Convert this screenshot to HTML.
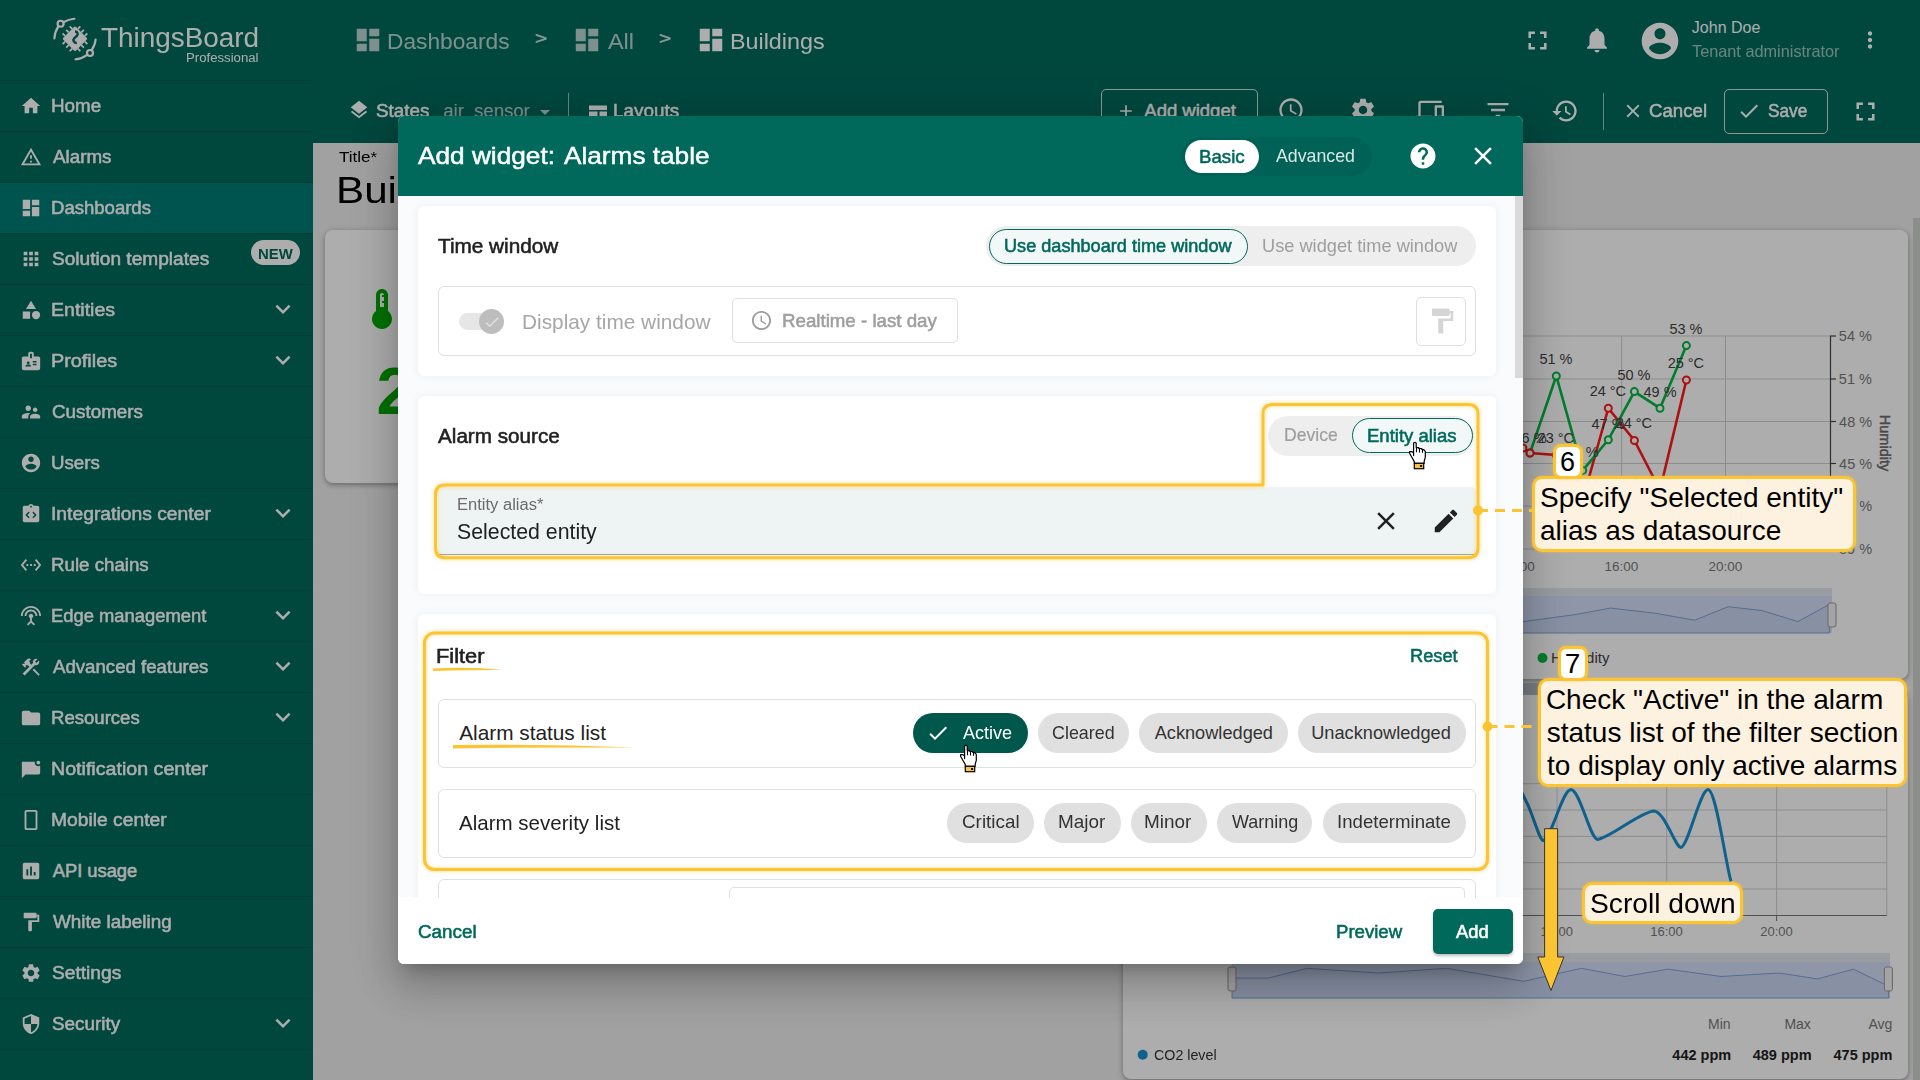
<!DOCTYPE html>
<html><head><meta charset="utf-8"><style>
html,body{margin:0;padding:0;width:1920px;height:1080px;overflow:hidden;}
body{position:relative;font-family:"Liberation Sans",sans-serif;background:#eeeeee;}
.t{position:absolute;white-space:pre;line-height:1;transform-origin:0 0;}
.a{position:absolute;box-sizing:border-box;}
svg.i{position:absolute;}

</style></head><body>
<div class="a" style="left:0;top:0;width:1920px;height:143px;background:#00695c"></div>
<div class="a" style="left:0;top:0;width:313px;height:1080px;background:#00695c"></div>
<div class="a" style="left:313px;top:143px;width:1607px;height:937px;background:#eeeeee"></div>
<div class="a" style="left:0;top:80px;width:313px;height:1px;background:rgba(0,0,0,.12)"></div>
<div class="a" style="left:0;top:131px;width:313px;height:1px;background:rgba(0,0,0,.12)"></div>
<svg class="i" style="left:20.00px;top:94.50px;" width="22" height="22" viewBox="0 0 24 24"><path fill="#ffffff" d="M10 20v-6h4v6h5v-8h3L12 3 2 12h3v8z"/></svg>
<div class="t" style="left:51.29px;top:96.51px;font-size:18.3px;color:#ffffff;transform:scaleX(1.0281);-webkit-text-stroke:0.5px #ffffff;">Home</div>
<div class="a" style="left:0;top:182px;width:313px;height:1px;background:rgba(0,0,0,.12)"></div>
<svg class="i" style="left:20.00px;top:145.50px;" width="22" height="22" viewBox="0 0 24 24"><path fill="#ffffff" d="M12 5.99L19.53 19H4.47L12 5.99M12 2L1 21h22L12 2zm1 14h-2v2h2v-2zm0-6h-2v4h2v-4z"/></svg>
<div class="t" style="left:52.80px;top:147.51px;font-size:18.3px;color:#ffffff;transform:scaleX(1.0286);-webkit-text-stroke:0.5px #ffffff;">Alarms</div>
<div class="a" style="left:0;top:183px;width:313px;height:50px;background:#007d75"></div>
<div class="a" style="left:0;top:233px;width:313px;height:1px;background:rgba(0,0,0,.12)"></div>
<svg class="i" style="left:20.00px;top:196.50px;" width="22" height="22" viewBox="0 0 24 24"><path fill="#ffffff" d="M3 13h8V3H3v10zm0 8h8v-6H3v6zm10 0h8V11h-8v10zm0-18v6h8V3h-8z"/></svg>
<div class="t" style="left:51.32px;top:198.51px;font-size:18.3px;color:#ffffff;transform:scaleX(1.0138);-webkit-text-stroke:0.5px #ffffff;">Dashboards</div>
<div class="a" style="left:0;top:284px;width:313px;height:1px;background:rgba(0,0,0,.12)"></div>
<svg class="i" style="left:20.00px;top:247.50px;" width="22" height="22" viewBox="0 0 24 24"><path fill="#ffffff" d="M4 8h4V4H4v4zm6 12h4v-4h-4v4zm-6 0h4v-4H4v4zm0-6h4v-4H4v4zm6 0h4v-4h-4v4zm6-10v4h4V4h-4zm-6 4h4V4h-4v4zm6 6h4v-4h-4v4zm0 6h4v-4h-4v4z"/></svg>
<div class="t" style="left:52.04px;top:249.51px;font-size:18.3px;color:#ffffff;transform:scaleX(1.0451);-webkit-text-stroke:0.5px #ffffff;">Solution templates</div>
<div class="a" style="left:0;top:335px;width:313px;height:1px;background:rgba(0,0,0,.12)"></div>
<svg class="i" style="left:20.00px;top:298.50px;" width="22" height="22" viewBox="0 0 24 24"><path fill="#ffffff" d="M12 2l-5.5 9h11z M17.5 13a4.5 4.5 0 1 0 0 9 4.5 4.5 0 1 0 0-9z M3 13.5h8v8H3z"/></svg>
<div class="t" style="left:51.23px;top:300.51px;font-size:18.3px;color:#ffffff;transform:scaleX(1.0690);-webkit-text-stroke:0.5px #ffffff;">Entities</div>
<svg class="i" style="left:267.50px;top:293.50px;" width="30" height="30" viewBox="0 0 24 24"><path fill="#ffffff" d="M16.59 8.59L12 13.17 7.41 8.59 6 10l6 6 6-6z"/></svg>
<div class="a" style="left:0;top:386px;width:313px;height:1px;background:rgba(0,0,0,.12)"></div>
<svg class="i" style="left:20.00px;top:349.50px;" width="22" height="22" viewBox="0 0 24 24"><path fill="#ffffff" d="M20 7h-5V4c0-1.1-.9-2-2-2h-2c-1.1 0-2 .9-2 2v3H4c-1.1 0-2 .9-2 2v11c0 1.1.9 2 2 2h16c1.1 0 2-.9 2-2V9c0-1.1-.9-2-2-2zM11 4h2v5h-2V4zm-2 8.5c.83 0 1.5.67 1.5 1.5s-.67 1.5-1.5 1.5-1.5-.67-1.5-1.5.67-1.5 1.5-1.5zM12 18H6v-.75c0-1 2-1.5 3-1.5s3 .5 3 1.5V18zm6-1.5h-4V15h4v1.5zm0-3h-4V12h4v1.5z"/></svg>
<div class="t" style="left:51.21px;top:351.51px;font-size:18.3px;color:#ffffff;transform:scaleX(1.0846);-webkit-text-stroke:0.5px #ffffff;">Profiles</div>
<svg class="i" style="left:267.50px;top:344.50px;" width="30" height="30" viewBox="0 0 24 24"><path fill="#ffffff" d="M16.59 8.59L12 13.17 7.41 8.59 6 10l6 6 6-6z"/></svg>
<div class="a" style="left:0;top:437px;width:313px;height:1px;background:rgba(0,0,0,.12)"></div>
<svg class="i" style="left:20.00px;top:400.50px;" width="22" height="22" viewBox="0 0 24 24"><path fill="#ffffff" d="M16.5 12c1.38 0 2.49-1.12 2.49-2.5S17.88 7 16.5 7C15.12 7 14 8.12 14 9.5s1.12 2.5 2.5 2.5zM9 11c1.66 0 2.99-1.34 2.99-3S10.66 5 9 5C7.34 5 6 6.34 6 8s1.34 3 3 3zm7.5 3c-1.83 0-5.5.92-5.5 2.75V19h11v-2.25c0-1.83-3.67-2.75-5.5-2.75zM9 13c-2.33 0-7 1.17-7 3.5V19h7v-2.25c0-.85.33-2.34 2.37-3.47C10.5 13.1 9.66 13 9 13z"/></svg>
<div class="t" style="left:51.86px;top:402.51px;font-size:18.3px;color:#ffffff;transform:scaleX(1.0287);-webkit-text-stroke:0.5px #ffffff;">Customers</div>
<div class="a" style="left:0;top:488px;width:313px;height:1px;background:rgba(0,0,0,.12)"></div>
<svg class="i" style="left:20.00px;top:451.50px;" width="22" height="22" viewBox="0 0 24 24"><path fill="#ffffff" d="M12 2C6.48 2 2 6.48 2 12s4.48 10 10 10 10-4.48 10-10S17.52 2 12 2zm0 3c1.66 0 3 1.34 3 3s-1.34 3-3 3-3-1.34-3-3 1.34-3 3-3zm0 14.2c-2.5 0-4.71-1.28-6-3.22.03-1.99 4-3.08 6-3.08 1.99 0 5.97 1.09 6 3.08-1.29 1.94-3.5 3.22-6 3.22z"/></svg>
<div class="t" style="left:51.49px;top:453.51px;font-size:18.3px;color:#ffffff;transform:scaleX(1.0227);-webkit-text-stroke:0.5px #ffffff;">Users</div>
<div class="a" style="left:0;top:539px;width:313px;height:1px;background:rgba(0,0,0,.12)"></div>
<svg class="i" style="left:20.00px;top:502.50px;" width="22" height="22" viewBox="0 0 24 24"><path fill="#ffffff" d="M19 3h-4.18C14.4 1.84 13.3 1 12 1s-2.4.84-2.82 2H5c-1.1 0-2 .9-2 2v14c0 1.1.9 2 2 2h14c1.1 0 2-.9 2-2V5c0-1.1-.9-2-2-2zm-7 0c.55 0 1 .45 1 1s-.45 1-1 1-1-.45-1-1 .45-1 1-1zM10.5 15.5L9.4 16.6 5.8 13l3.6-3.6 1.1 1.1L8 13l2.5 2.5zm3 0L16 13l-2.5-2.5 1.1-1.1 3.6 3.6-3.6 3.6-1.1-1.1z"/></svg>
<div class="t" style="left:51.06px;top:504.51px;font-size:18.3px;color:#ffffff;transform:scaleX(1.0555);-webkit-text-stroke:0.5px #ffffff;">Integrations center</div>
<svg class="i" style="left:267.50px;top:497.50px;" width="30" height="30" viewBox="0 0 24 24"><path fill="#ffffff" d="M16.59 8.59L12 13.17 7.41 8.59 6 10l6 6 6-6z"/></svg>
<div class="a" style="left:0;top:590px;width:313px;height:1px;background:rgba(0,0,0,.12)"></div>
<svg class="i" style="left:20.00px;top:553.50px;" width="22" height="22" viewBox="0 0 24 24"><path fill="#ffffff" d="M7.77 6.76L6.23 5.48.82 12l5.41 6.52 1.54-1.28L3.42 12l4.35-5.24zM7 13h2v-2H7v2zm10-2h-2v2h2v-2zm-6 2h2v-2h-2v2zm6.77-7.52l-1.54 1.28L20.58 12l-4.35 5.24 1.54 1.28L23.18 12l-5.41-6.52z"/></svg>
<div class="t" style="left:51.30px;top:555.51px;font-size:18.3px;color:#ffffff;transform:scaleX(1.0229);-webkit-text-stroke:0.5px #ffffff;">Rule chains</div>
<div class="a" style="left:0;top:641px;width:313px;height:1px;background:rgba(0,0,0,.12)"></div>
<svg class="i" style="left:20.00px;top:604.50px;" width="22" height="22" viewBox="0 0 24 24"><path fill="#ffffff" d="M12 5c-3.87 0-7 3.13-7 7h2c0-2.76 2.24-5 5-5s5 2.24 5 5h2c0-3.87-3.13-7-7-7zm1 9.29c.88-.39 1.5-1.26 1.5-2.29 0-1.38-1.12-2.5-2.5-2.5S9.5 10.62 9.5 12c0 1.02.62 1.9 1.5 2.29v3.3L7.59 21 9 22.41l3-3 3 3L16.41 21 13 17.59v-3.3zM12 1C5.93 1 1 5.93 1 12h2c0-4.97 4.03-9 9-9s9 4.03 9 9h2c0-6.07-4.93-11-11-11z"/></svg>
<div class="t" style="left:51.33px;top:606.51px;font-size:18.3px;color:#ffffff;transform:scaleX(1.0051);-webkit-text-stroke:0.5px #ffffff;">Edge management</div>
<svg class="i" style="left:267.50px;top:599.50px;" width="30" height="30" viewBox="0 0 24 24"><path fill="#ffffff" d="M16.59 8.59L12 13.17 7.41 8.59 6 10l6 6 6-6z"/></svg>
<div class="a" style="left:0;top:692px;width:313px;height:1px;background:rgba(0,0,0,.12)"></div>
<svg class="i" style="left:20.00px;top:655.50px;" width="22" height="22" viewBox="0 0 24 24"><path fill="#ffffff" d="M13.78 15.17l1.41-1.41 6.36 6.36-1.41 1.41zM17.5 10c1.93 0 3.5-1.57 3.5-3.5 0-.58-.16-1.12-.41-1.6l-2.7 2.7-1.49-1.49 2.7-2.7c-.48-.25-1.02-.41-1.6-.41C15.57 3 14 4.57 14 6.5c0 .41.08.8.21 1.16l-1.85 1.85-1.78-1.78.71-.71-1.41-1.41L12 3.49c-1.17-1.17-3.07-1.17-4.24 0L4.22 7.03l1.41 1.41H2.81l-.71.71 3.54 3.54.71-.71V9.15l1.41 1.41.71-.71 1.78 1.78-7.41 7.41 2.12 2.12L16.34 9.79c.36.13.75.21 1.16.21z"/></svg>
<div class="t" style="left:52.80px;top:657.51px;font-size:18.3px;color:#ffffff;transform:scaleX(1.0194);-webkit-text-stroke:0.5px #ffffff;">Advanced features</div>
<svg class="i" style="left:267.50px;top:650.50px;" width="30" height="30" viewBox="0 0 24 24"><path fill="#ffffff" d="M16.59 8.59L12 13.17 7.41 8.59 6 10l6 6 6-6z"/></svg>
<div class="a" style="left:0;top:743px;width:313px;height:1px;background:rgba(0,0,0,.12)"></div>
<svg class="i" style="left:20.00px;top:706.50px;" width="22" height="22" viewBox="0 0 24 24"><path fill="#ffffff" d="M10 4H4c-1.1 0-1.99.9-1.99 2L2 18c0 1.1.9 2 2 2h16c1.1 0 2-.9 2-2V8c0-1.1-.9-2-2-2h-8l-2-2z"/></svg>
<div class="t" style="left:51.31px;top:708.51px;font-size:18.3px;color:#ffffff;transform:scaleX(1.0151);-webkit-text-stroke:0.5px #ffffff;">Resources</div>
<svg class="i" style="left:267.50px;top:701.50px;" width="30" height="30" viewBox="0 0 24 24"><path fill="#ffffff" d="M16.59 8.59L12 13.17 7.41 8.59 6 10l6 6 6-6z"/></svg>
<div class="a" style="left:0;top:794px;width:313px;height:1px;background:rgba(0,0,0,.12)"></div>
<svg class="i" style="left:20.00px;top:757.50px;" width="22" height="22" viewBox="0 0 24 24"><path fill="#ffffff" d="M20 2.9a2.1 2.1 0 1 1 0 4.2 2.1 2.1 0 0 1 0-4.2zM2 4h14.2a3.9 3.9 0 0 0 5.8 4.3V16c0 1.1-.9 2-2 2H6l-4 4z"/></svg>
<div class="t" style="left:51.23px;top:759.51px;font-size:18.3px;color:#ffffff;transform:scaleX(1.0741);-webkit-text-stroke:0.5px #ffffff;">Notification center</div>
<div class="a" style="left:0;top:845px;width:313px;height:1px;background:rgba(0,0,0,.12)"></div>
<svg class="i" style="left:20.00px;top:808.50px;" width="22" height="22" viewBox="0 0 24 24"><path fill="#ffffff" d="M17 1.01L7 1c-1.1 0-2 .9-2 2v18c0 1.1.9 2 2 2h10c1.1 0 2-.9 2-2V3c0-1.1-.9-1.99-2-1.99zM17 21H7V3h10v18z"/></svg>
<div class="t" style="left:51.26px;top:810.51px;font-size:18.3px;color:#ffffff;transform:scaleX(1.0541);-webkit-text-stroke:0.5px #ffffff;">Mobile center</div>
<div class="a" style="left:0;top:896px;width:313px;height:1px;background:rgba(0,0,0,.12)"></div>
<svg class="i" style="left:20.00px;top:859.50px;" width="22" height="22" viewBox="0 0 24 24"><path fill="#ffffff" d="M19 3H5c-1.1 0-2 .9-2 2v14c0 1.1.9 2 2 2h14c1.1 0 2-.9 2-2V5c0-1.1-.9-2-2-2zM9 17H7v-7h2v7zm4 0h-2V7h2v10zm4 0h-2v-4h2v4z"/></svg>
<div class="t" style="left:52.80px;top:861.51px;font-size:18.3px;color:#ffffff;-webkit-text-stroke:0.5px #ffffff;">API usage</div>
<div class="a" style="left:0;top:947px;width:313px;height:1px;background:rgba(0,0,0,.12)"></div>
<svg class="i" style="left:20.00px;top:910.50px;" width="22" height="22" viewBox="0 0 24 24"><path fill="#ffffff" d="M18 4V3c0-.55-.45-1-1-1H5c-.55 0-1 .45-1 1v4c0 .55.45 1 1 1h12c.55 0 1-.45 1-1V6h1v4H9v11c0 .55.45 1 1 1h2c.55 0 1-.45 1-1v-9h8V4h-3z"/></svg>
<div class="t" style="left:52.80px;top:912.51px;font-size:18.3px;color:#ffffff;transform:scaleX(1.0336);-webkit-text-stroke:0.5px #ffffff;">White labeling</div>
<div class="a" style="left:0;top:998px;width:313px;height:1px;background:rgba(0,0,0,.12)"></div>
<svg class="i" style="left:20.00px;top:961.50px;" width="22" height="22" viewBox="0 0 24 24"><path fill="#ffffff" d="M19.14 12.94c.04-.3.06-.61.06-.94 0-.32-.02-.64-.07-.94l2.03-1.58c.18-.14.23-.41.12-.61l-1.92-3.32c-.12-.22-.37-.29-.59-.22l-2.39.96c-.5-.38-1.03-.7-1.62-.94l-.36-2.54c-.04-.24-.24-.41-.48-.41h-3.84c-.24 0-.43.17-.47.41l-.36 2.54c-.59.24-1.13.57-1.62.94l-2.39-.96c-.22-.08-.47 0-.59.22L2.74 8.87c-.12.21-.08.47.12.61l2.03 1.58c-.05.3-.09.63-.09.94s.02.64.07.94l-2.03 1.58c-.18.14-.23.41-.12.61l1.92 3.32c.12.22.37.29.59.22l2.39-.96c.5.38 1.030.7 1.62.94l.36 2.54c.05.24.24.41.48.41h3.84c.24 0 .44-.17.47-.41l.36-2.54c.59-.24 1.13-.56 1.62-.94l2.39.96c.22.08.47 0 .59-.22l1.92-3.32c.12-.22.07-.47-.12-.61l-2.01-1.58zM12 15.6c-1.98 0-3.6-1.62-3.6-3.6s1.62-3.6 3.6-3.6 3.6 1.62 3.6 3.6-1.62 3.6-3.6 3.6z"/></svg>
<div class="t" style="left:52.03px;top:963.51px;font-size:18.3px;color:#ffffff;transform:scaleX(1.0487);-webkit-text-stroke:0.5px #ffffff;">Settings</div>
<div class="a" style="left:0;top:1049px;width:313px;height:1px;background:rgba(0,0,0,.12)"></div>
<svg class="i" style="left:20.00px;top:1012.50px;" width="22" height="22" viewBox="0 0 24 24"><path fill="#ffffff" d="M12 1L3 5v6c0 5.55 3.84 10.74 9 12 5.16-1.26 9-6.45 9-12V5l-9-4zm0 10.99h7c-.53 4.12-3.28 7.79-7 8.94V12H5V6.3l7-3.11v8.8z"/></svg>
<div class="t" style="left:52.04px;top:1014.51px;font-size:18.3px;color:#ffffff;transform:scaleX(1.0325);-webkit-text-stroke:0.5px #ffffff;">Security</div>
<svg class="i" style="left:267.50px;top:1007.50px;" width="30" height="30" viewBox="0 0 24 24"><path fill="#ffffff" d="M16.59 8.59L12 13.17 7.41 8.59 6 10l6 6 6-6z"/></svg>
<div class="a" style="left:251px;top:240px;width:49px;height:25px;border-radius:13px;background:#fff"></div>
<div class="t" style="left:257.60px;top:246.65px;font-size:14px;color:#00695c;font-weight:bold;transform:scaleX(1.0656);">NEW</div>
<svg class="i" style="left:50px;top:14px" width="50" height="50" viewBox="0 0 50 50">
<g fill="none" stroke="#fff" stroke-width="2.2" stroke-linecap="round">
<path d="M8.3 12.3 C6 16 4.6 20 4.4 24.5"/><circle cx="10.6" cy="9.75" r="3"/><path d="M13.4 8.3 C17 6 20.5 5 24.4 4.75"/>
<path d="M41.7 36.2 C44 32.5 45.4 29 45.6 25.5"/><circle cx="40" cy="39" r="3"/><path d="M37.2 40.8 C33.5 43.5 29.5 45 25.6 45.4"/>
</g>
<g transform="translate(25,24.75) rotate(45)"><rect x="-9" y="-9" width="18" height="18" rx="1.5" fill="#fff"/>
<path d="M-5 -12.5v3.5M0 -12.5v3.5M5 -12.5v3.5M-5 9v3.5M0 9v3.5M5 9v3.5M-12.5 -5h3.5M-12.5 0h3.5M-12.5 5h3.5M9 -5h3.5M9 0h3.5M9 5h3.5" stroke="#fff" stroke-width="1.8"/></g>
<path d="M25 17.5 c2.5 0 3.5 2.5 1.8 4.3 l-2.6 2.6 c-1.8 1.8 0 4.6 2.6 4.6" fill="none" stroke="#00695c" stroke-width="2.4"/>
</svg>
<div class="t" style="left:101.34px;top:24.64px;font-size:27px;color:#ffffff;transform:scaleX(1.0329);">ThingsBoard</div>
<div class="t" style="left:186.45px;top:52.34px;font-size:12.3px;color:#ffffff;transform:scaleX(1.0707);">Professional</div>
<svg class="i" style="left:352.50px;top:25.00px;" width="30" height="30" viewBox="0 0 24 24"><path fill="rgba(255,255,255,.72)" d="M3 13h8V3H3v10zm0 8h8v-6H3v6zm10 0h8V11h-8v10zm0-18v6h8V3h-8z"/></svg>
<div class="t" style="left:387.18px;top:30.95px;font-size:22.5px;color:rgba(255,255,255,.72);transform:scaleX(1.0097);">Dashboards</div>
<div class="t" style="left:535.16px;top:29.61px;font-size:17px;color:rgba(255,255,255,.72);transform:scaleX(1.2353);-webkit-text-stroke:0.5px rgba(255,255,255,.72);">&gt;</div>
<svg class="i" style="left:571.50px;top:25.00px;" width="30" height="30" viewBox="0 0 24 24"><path fill="rgba(255,255,255,.72)" d="M3 13h8V3H3v10zm0 8h8v-6H3v6zm10 0h8V11h-8v10zm0-18v6h8V3h-8z"/></svg>
<div class="t" style="left:607.70px;top:30.95px;font-size:22.5px;color:rgba(255,255,255,.72);transform:scaleX(1.0379);">All</div>
<div class="t" style="left:659.16px;top:29.61px;font-size:17px;color:rgba(255,255,255,.72);transform:scaleX(1.2353);-webkit-text-stroke:0.5px rgba(255,255,255,.72);">&gt;</div>
<svg class="i" style="left:695.50px;top:25.00px;" width="30" height="30" viewBox="0 0 24 24"><path fill="#ffffff" d="M3 13h8V3H3v10zm0 8h8v-6H3v6zm10 0h8V11h-8v10zm0-18v6h8V3h-8z"/></svg>
<div class="t" style="left:729.84px;top:30.95px;font-size:22.5px;color:#ffffff;transform:scaleX(1.0357);">Buildings</div>
<svg class="i" style="left:1521.50px;top:24.50px;" width="31" height="31" viewBox="0 0 24 24"><path fill="#ffffff" d="M7 14H5v5h5v-2H7v-3zm-2-4h2V7h3V5H5v5zm12 7h-3v2h5v-5h-2v3zM14 5v2h3v3h2V5h-5z"/></svg>
<svg class="i" style="left:1582.00px;top:25.00px;" width="30" height="30" viewBox="0 0 24 24"><path fill="#ffffff" d="M12 22c1.1 0 2-.9 2-2h-4c0 1.1.89 2 2 2zm6-6v-5c0-3.07-1.64-5.64-4.5-6.32V4c0-.83-.67-1.5-1.5-1.5s-1.5.67-1.5 1.5v.68C7.63 5.36 6 7.92 6 11v5l-2 2v1h16v-1l-2-2z"/></svg>
<svg class="i" style="left:1637.50px;top:18.50px;" width="44" height="44" viewBox="0 0 24 24"><path fill="#ffffff" d="M12 2C6.48 2 2 6.48 2 12s4.48 10 10 10 10-4.48 10-10S17.52 2 12 2zm0 3c1.66 0 3 1.34 3 3s-1.34 3-3 3-3-1.34-3-3 1.34-3 3-3zm0 14.2c-2.5 0-4.71-1.28-6-3.22.03-1.99 4-3.08 6-3.08 1.99 0 5.97 1.09 6 3.08-1.29 1.94-3.5 3.22-6 3.22z"/></svg>
<div class="t" style="left:1691.84px;top:19.76px;font-size:16px;color:#ffffff;">John Doe</div>
<div class="t" style="left:1691.67px;top:43.33px;font-size:16.5px;color:rgba(255,255,255,.6);transform:scaleX(0.9869);">Tenant administrator</div>
<svg class="i" style="left:1857.00px;top:27.00px;" width="26" height="26" viewBox="0 0 24 24"><path fill="#ffffff" d="M12 8c1.1 0 2-.9 2-2s-.9-2-2-2-2 .9-2 2 .9 2 2 2zm0 2c-1.1 0-2 .9-2 2s.9 2 2 2 2-.9 2-2-.9-2-2-2zm0 6c-1.1 0-2 .9-2 2s.9 2 2 2 2-.9 2-2-.9-2-2-2z"/></svg>
<svg class="i" style="left:347.50px;top:99.00px;" width="22" height="22" viewBox="0 0 24 24"><path fill="#ffffff" d="M11.99 18.54l-7.37-5.73L3 14.07l9 7 9-7-1.63-1.27-7.38 5.74zM12 16l7.36-5.73L21 9l-9-7-9 7 1.63 1.27L12 16z"/></svg>
<div class="t" style="left:375.95px;top:101.64px;font-size:18.5px;color:#ffffff;transform:scaleX(1.0166);-webkit-text-stroke:0.5px #ffffff;">States</div>
<div class="t" style="left:443.26px;top:101.64px;font-size:18.5px;color:rgba(255,255,255,.72);">air_sensor</div>
<svg class="i" style="left:533.00px;top:100.00px;" width="24" height="24" viewBox="0 0 24 24"><path fill="rgba(255,255,255,.72)" d="M7 10l5 5 5-5z"/></svg>
<div class="a" style="left:568px;top:93px;width:1px;height:40px;background:rgba(255,255,255,.6)"></div>
<svg class="i" style="left:585.60px;top:99.50px;" width="24" height="24" viewBox="0 0 24 24"><path fill="#ffffff" d="M3 5.5h18v4.5H3z M3 11.5h8.5v7.5H3z M13.5 11.5h7.5v7.5h-7.5z"/></svg>
<div class="t" style="left:613.49px;top:101.64px;font-size:18.5px;color:#ffffff;transform:scaleX(1.0198);-webkit-text-stroke:0.5px #ffffff;">Layouts</div>
<div class="a" style="left:1101px;top:89px;width:157px;height:45px;border:1.5px solid rgba(255,255,255,.8);border-radius:5px"></div>
<svg class="i" style="left:1116.00px;top:101.00px;" width="20" height="20" viewBox="0 0 24 24"><path fill="#ffffff" d="M19 13h-6v6h-2v-6H5v-2h6V5h2v6h6v2z"/></svg>
<div class="t" style="left:1144.30px;top:101.64px;font-size:18.5px;color:#ffffff;-webkit-text-stroke:0.5px #ffffff;">Add widget</div>
<svg class="i" style="left:1276.50px;top:96.00px;" width="28" height="28" viewBox="0 0 24 24"><path fill="#ffffff" d="M11.99 2C6.47 2 2 6.48 2 12s4.47 10 9.99 10C17.52 22 22 17.52 22 12S17.52 2 11.99 2zM12 20c-4.42 0-8-3.58-8-8s3.58-8 8-8 8 3.58 8 8-3.58 8-8 8zm.5-13H11v6l5.25 3.15.75-1.23-4.5-2.67z"/></svg>
<svg class="i" style="left:1348.50px;top:96.00px;" width="28" height="28" viewBox="0 0 24 24"><path fill="#ffffff" d="M19.14 12.94c.04-.3.06-.61.06-.94 0-.32-.02-.64-.07-.94l2.03-1.58c.18-.14.23-.41.12-.61l-1.92-3.32c-.12-.22-.37-.29-.59-.22l-2.39.96c-.5-.38-1.03-.7-1.62-.94l-.36-2.54c-.04-.24-.24-.41-.48-.41h-3.84c-.24 0-.43.17-.47.41l-.36 2.54c-.59.24-1.13.57-1.62.94l-2.39-.96c-.22-.08-.47 0-.59.22L2.74 8.87c-.12.21-.08.47.12.61l2.03 1.58c-.05.3-.09.63-.09.94s.02.64.07.94l-2.03 1.58c-.18.14-.23.41-.12.61l1.92 3.32c.12.22.37.29.59.22l2.39-.96c.5.38 1.030.7 1.62.94l.36 2.54c.05.24.24.41.48.41h3.84c.24 0 .44-.17.47-.41l.36-2.54c.59-.24 1.13-.56 1.62-.94l2.39.96c.22.08.47 0 .59-.22l1.92-3.32c.12-.22.07-.47-.12-.61l-2.01-1.58zM12 15.6c-1.98 0-3.6-1.62-3.6-3.6s1.62-3.6 3.6-3.6 3.6 1.62 3.6 3.6-1.62 3.6-3.6 3.6z"/></svg>
<svg class="i" style="left:1416.00px;top:96.00px;" width="28" height="28" viewBox="0 0 24 24"><path fill="#ffffff" d="M4 6h18V4H4c-1.1 0-2 .9-2 2v11H0v3h14v-3H4V6zm19 2h-6c-.55 0-1 .45-1 1v10c0 .55.45 1 1 1h6c.55 0 1-.45 1-1V9c0-.55-.45-1-1-1zm-1 9h-4v-7h4v7z"/></svg>
<svg class="i" style="left:1483.50px;top:96.00px;" width="28" height="28" viewBox="0 0 24 24"><path fill="#ffffff" d="M10 18h4v-2h-4v2zM3 6v2h18V6H3zm3 7h12v-2H6v2z"/></svg>
<svg class="i" style="left:1551.00px;top:97.00px;" width="28" height="28" viewBox="0 0 24 24"><path fill="#ffffff" d="M13 3c-4.97 0-9 4.03-9 9H1l3.89 3.89.07.14L9 12H6c0-3.87 3.13-7 7-7s7 3.13 7 7-3.13 7-7 7c-1.93 0-3.68-.79-4.94-2.06l-1.42 1.42C8.27 19.990 10.51 21 13 21c4.97 0 9-4.03 9-9s-4.03-9-9-9zm-1 5v5l4.28 2.54.72-1.21-3.5-2.08V8H12z"/></svg>
<div class="a" style="left:1603px;top:93px;width:1px;height:37px;background:rgba(255,255,255,.6)"></div>
<svg class="i" style="left:1621.50px;top:100.00px;" width="22" height="22" viewBox="0 0 24 24"><path fill="#ffffff" d="M19 6.41L17.59 5 12 10.59 6.41 5 5 6.41 10.59 12 5 17.59 6.41 19 12 13.41 17.59 19 19 17.59 13.41 12z"/></svg>
<div class="t" style="left:1649.07px;top:101.64px;font-size:18.5px;color:#ffffff;transform:scaleX(1.0088);-webkit-text-stroke:0.5px #ffffff;">Cancel</div>
<div class="a" style="left:1724px;top:89px;width:104px;height:45px;border:1.5px solid rgba(255,255,255,.8);border-radius:5px"></div>
<svg class="i" style="left:1737.00px;top:99.00px;" width="24" height="24" viewBox="0 0 24 24"><path fill="#ffffff" d="M9 16.17L4.83 12l-1.42 1.41L9 19 21 7l-1.41-1.41z"/></svg>
<div class="t" style="left:1768.31px;top:101.64px;font-size:18.5px;color:#ffffff;transform:scaleX(0.9323);-webkit-text-stroke:0.5px #ffffff;">Save</div>
<svg class="i" style="left:1849.50px;top:95.50px;" width="31" height="31" viewBox="0 0 24 24"><path fill="#ffffff" d="M7 14H5v5h5v-2H7v-3zm-2-4h2V7h3V5H5v5zm12 7h-3v2h5v-5h-2v3zM14 5v2h3v3h2V5h-5z"/></svg>
<div class="a" style="left:1913px;top:218px;width:7px;height:862px;background:#cfd1cf"></div>
<div class="t" style="left:338.76px;top:149.48px;font-size:15.5px;color:#000;transform:scaleX(1.0995);">Title*</div>
<div class="t" style="left:335.62px;top:171.96px;font-size:37.5px;color:#000;transform:scaleX(1.1255);">Bui</div>
<div class="a" style="left:325px;top:230px;width:786px;height:253px;background:#fff;border-radius:8px;box-shadow:0 2px 4px rgba(0,0,0,.25),0 1px 10px rgba(0,0,0,.12);"></div>
<svg class="i" style="left:357.50px;top:285.00px;" width="48" height="48" viewBox="0 0 24 24"><path fill="#00a800" d="M15 13V5c0-1.66-1.34-3-3-3S9 3.34 9 5v8c-1.21.91-2 2.37-2 4 0 2.76 2.24 5 5 5s5-2.24 5-5c0-1.63-.79-3.09-2-4zm-4-8c0-.55.45-1 1-1s1 .45 1 1h-1v1h1v2h-1v1h1v2h-2V5z"/></svg>
<div class="t" style="left:376.52px;top:357.93px;font-size:66px;color:#00a800;font-weight:bold;">24</div>
<div class="a" style="left:1123px;top:230px;width:785px;height:449px;background:#fff;border-radius:8px;box-shadow:0 2px 4px rgba(0,0,0,.25),0 1px 10px rgba(0,0,0,.12);"></div>
<div class="a" style="left:1123px;top:691px;width:785px;height:388px;background:#fff;border-radius:8px;box-shadow:0 2px 4px rgba(0,0,0,.25),0 1px 10px rgba(0,0,0,.12);"></div>
<svg class="i" style="left:0;top:0" width="1920" height="1080" viewBox="0 0 1920 1080"><line x1="1160" y1="336" x2="1830" y2="336" stroke="#cfcfcf" stroke-width="1"/><line x1="1160" y1="379" x2="1830" y2="379" stroke="#cfcfcf" stroke-width="1"/><line x1="1160" y1="421.5" x2="1830" y2="421.5" stroke="#cfcfcf" stroke-width="1"/><line x1="1160" y1="463.5" x2="1830" y2="463.5" stroke="#cfcfcf" stroke-width="1"/><line x1="1160" y1="506" x2="1830" y2="506" stroke="#cfcfcf" stroke-width="1"/><line x1="1160" y1="549" x2="1830" y2="549" stroke="#cfcfcf" stroke-width="1"/><line x1="1518" y1="336" x2="1518" y2="549" stroke="#cfcfcf" stroke-width="1"/><line x1="1621.7" y1="336" x2="1621.7" y2="549" stroke="#cfcfcf" stroke-width="1"/><line x1="1725.5" y1="336" x2="1725.5" y2="549" stroke="#cfcfcf" stroke-width="1"/><line x1="1830.5" y1="336" x2="1830.5" y2="549" stroke="#444" stroke-width="1.2"/><line x1="1830" y1="336" x2="1836" y2="336" stroke="#444" stroke-width="1.2"/><line x1="1830" y1="379" x2="1836" y2="379" stroke="#444" stroke-width="1.2"/><line x1="1830" y1="421.5" x2="1836" y2="421.5" stroke="#444" stroke-width="1.2"/><line x1="1830" y1="463.5" x2="1836" y2="463.5" stroke="#444" stroke-width="1.2"/><line x1="1830" y1="506" x2="1836" y2="506" stroke="#444" stroke-width="1.2"/><line x1="1830" y1="549" x2="1836" y2="549" stroke="#444" stroke-width="1.2"/><polyline fill="none" stroke="#ff1a1a" stroke-width="2.6" points="1505,446 1522.9,448 1530,453 1556.3,455 1582.7,500 1608.3,408.2 1634.4,440.5 1660,490 1686.4,380"/><polyline fill="none" stroke="#00b843" stroke-width="2.6" points="1505,440 1530,453 1556.3,376 1582.7,470.4 1608.3,439.8 1634.4,391.6 1660,408.2 1686.4,345.6"/><circle cx="1530" cy="453" r="3.5" fill="#fff" stroke="#00b843" stroke-width="2"/><circle cx="1556.3" cy="376" r="3.5" fill="#fff" stroke="#00b843" stroke-width="2"/><circle cx="1582.7" cy="470.4" r="3.5" fill="#fff" stroke="#00b843" stroke-width="2"/><circle cx="1608.3" cy="439.8" r="3.5" fill="#fff" stroke="#00b843" stroke-width="2"/><circle cx="1634.4" cy="391.6" r="3.5" fill="#fff" stroke="#00b843" stroke-width="2"/><circle cx="1660" cy="408.2" r="3.5" fill="#fff" stroke="#00b843" stroke-width="2"/><circle cx="1686.4" cy="345.6" r="3.5" fill="#fff" stroke="#00b843" stroke-width="2"/><circle cx="1522.9" cy="448" r="3.5" fill="#fff" stroke="#ff1a1a" stroke-width="2"/><circle cx="1530" cy="453" r="3.5" fill="#fff" stroke="#ff1a1a" stroke-width="2"/><circle cx="1556.3" cy="455" r="3.5" fill="#fff" stroke="#ff1a1a" stroke-width="2"/><circle cx="1582.7" cy="500" r="3.5" fill="#fff" stroke="#ff1a1a" stroke-width="2"/><circle cx="1608.3" cy="408.2" r="3.5" fill="#fff" stroke="#ff1a1a" stroke-width="2"/><circle cx="1634.4" cy="440.5" r="3.5" fill="#fff" stroke="#ff1a1a" stroke-width="2"/><circle cx="1660" cy="490" r="3.5" fill="#fff" stroke="#ff1a1a" stroke-width="2"/><circle cx="1686.4" cy="380" r="3.5" fill="#fff" stroke="#ff1a1a" stroke-width="2"/><rect x="1210" y="588" width="622" height="45" fill="#d2def8"/><rect x="1210" y="588" width="622" height="8" fill="#e2e6ee"/><polygon fill="#c9d6f2" stroke="#7fa0d8" stroke-width="1" points="1210,633 1210,618 1300,620 1400,612 1480,622 1523.7,621.6 1576.6,614.4 1610.3,608.1 1653.7,613 1694.6,620.2 1728.3,606.7 1762,610.6 1798,621.6 1829.4,604.3 1829.4,633"/><rect x="1828" y="603" width="8" height="24" rx="2" fill="#f2f2f2" stroke="#999"/><circle cx="1542.5" cy="658" r="5" fill="#00b843"/><line x1="1180" y1="783.7" x2="1887" y2="783.7" stroke="#cfcfcf" stroke-width="1"/><line x1="1180" y1="810" x2="1887" y2="810" stroke="#cfcfcf" stroke-width="1"/><line x1="1180" y1="836.4" x2="1887" y2="836.4" stroke="#cfcfcf" stroke-width="1"/><line x1="1180" y1="862.7" x2="1887" y2="862.7" stroke="#cfcfcf" stroke-width="1"/><line x1="1180" y1="889" x2="1887" y2="889" stroke="#cfcfcf" stroke-width="1"/><line x1="1557" y1="783" x2="1557" y2="915" stroke="#cfcfcf" stroke-width="1"/><line x1="1666.7" y1="783" x2="1666.7" y2="915" stroke="#cfcfcf" stroke-width="1"/><line x1="1776.6" y1="783" x2="1776.6" y2="915" stroke="#cfcfcf" stroke-width="1"/><line x1="1886.8" y1="783" x2="1886.8" y2="915" stroke="#cfcfcf" stroke-width="1"/><line x1="1180" y1="915.5" x2="1887" y2="915.5" stroke="#777" stroke-width="1.2"/><line x1="1776.6" y1="915" x2="1776.6" y2="921" stroke="#777" stroke-width="1"/><path fill="none" stroke="#1a90d0" stroke-width="3" d="M1505 760 C1515 775 1520 790 1528 805 C1535 822 1540 840 1543 840.6 C1552 838 1562 790 1571 789.6 C1580 790 1590 839 1597.6 839.4 C1610 838 1640 812 1654 811 C1665 812 1675 847 1680.9 847.4 C1688 847 1700 790 1708 789.6 C1716 790 1725 860 1731 881.5"/><rect x="1232" y="953" width="658" height="45" fill="#d2def8"/><rect x="1232" y="953" width="658" height="9" fill="#e2e6ee"/><polygon fill="#c9d6f2" stroke="#7fa0d8" stroke-width="1" points="1232,998 1232.4,978 1268.5,978 1307,968.3 1379,973 1446.6,968.3 1523.7,981.3 1581.5,968.3 1624.8,976.5 1668,969.2 1721,976.5 1779,973 1817.4,978.9 1853.5,969.2 1888,986 1889,998"/><rect x="1228" y="967" width="8" height="24" rx="2" fill="#f2f2f2" stroke="#999"/><rect x="1884.4" y="967" width="8" height="24" rx="2" fill="#f2f2f2" stroke="#999"/><circle cx="1142.7" cy="1054.8" r="5" fill="#1a90d0"/></svg>
<div class="t" style="left:1838.82px;top:329.23px;font-size:14.5px;color:#7a7a7a;">54 %</div>
<div class="t" style="left:1838.82px;top:372.23px;font-size:14.5px;color:#7a7a7a;">51 %</div>
<div class="t" style="left:1839.11px;top:414.73px;font-size:14.5px;color:#7a7a7a;">48 %</div>
<div class="t" style="left:1839.11px;top:456.73px;font-size:14.5px;color:#7a7a7a;">45 %</div>
<div class="t" style="left:1839.11px;top:499.23px;font-size:14.5px;color:#7a7a7a;">42 %</div>
<div class="t" style="left:1838.97px;top:542.23px;font-size:14.5px;color:#7a7a7a;">39 %</div>
<div class="t" style="left:1885px;top:443px;font-size:14.5px;color:#6a6a6a;-webkit-text-stroke:.45px #6a6a6a;transform:translate(-50%,-50%) rotate(90deg);transform-origin:50% 50%">Humidity</div>
<div class="t" style="left:1500.88px;top:560.07px;font-size:13.5px;color:#7a7a7a;">12:00</div>
<div class="t" style="left:1604.58px;top:560.07px;font-size:13.5px;color:#7a7a7a;">16:00</div>
<div class="t" style="left:1708.52px;top:560.07px;font-size:13.5px;color:#7a7a7a;">20:00</div>
<div class="t" style="left:1669.40px;top:321.73px;font-size:14.5px;color:#444;">53 %</div>
<div class="t" style="left:1539.40px;top:351.73px;font-size:14.5px;color:#444;">51 %</div>
<div class="t" style="left:1617.40px;top:367.73px;font-size:14.5px;color:#444;">50 %</div>
<div class="t" style="left:1643.54px;top:384.73px;font-size:14.5px;color:#444;">49 %</div>
<div class="t" style="left:1589.66px;top:383.73px;font-size:14.5px;color:#444;">24 °C</div>
<div class="t" style="left:1667.66px;top:355.73px;font-size:14.5px;color:#444;">25 °C</div>
<div class="t" style="left:1591.54px;top:416.73px;font-size:14.5px;color:#444;">47 %</div>
<div class="t" style="left:1615.66px;top:415.73px;font-size:14.5px;color:#444;">24 °C</div>
<div class="t" style="left:1537.66px;top:430.73px;font-size:14.5px;color:#444;">23 °C</div>
<div class="t" style="left:1513.54px;top:430.73px;font-size:14.5px;color:#444;">46 %</div>
<div class="t" style="left:1565.54px;top:444.73px;font-size:14.5px;color:#444;">45 %</div>
<div class="t" style="left:1551.10px;top:650.30px;font-size:15px;color:#444;">Humidity</div>
<div class="t" style="left:1540.51px;top:925.30px;font-size:13px;color:#7a7a7a;">12:00</div>
<div class="t" style="left:1650.21px;top:925.30px;font-size:13px;color:#7a7a7a;">16:00</div>
<div class="t" style="left:1760.24px;top:925.30px;font-size:13px;color:#7a7a7a;">20:00</div>
<div class="t" style="left:1708.03px;top:1016.85px;font-size:14px;color:#777;">Min</div>
<div class="t" style="left:1784.39px;top:1016.85px;font-size:14px;color:#777;">Max</div>
<div class="t" style="left:1868.42px;top:1016.85px;font-size:14px;color:#777;">Avg</div>
<div class="t" style="left:1153.89px;top:1047.30px;font-size:15px;color:#333;transform:scaleX(0.9505);">CO2 level</div>
<div class="t" style="left:1672.33px;top:1047.53px;font-size:14.5px;color:#222;font-weight:bold;">442 ppm</div>
<div class="t" style="left:1752.73px;top:1047.53px;font-size:14.5px;color:#222;font-weight:bold;">489 ppm</div>
<div class="t" style="left:1833.53px;top:1047.53px;font-size:14.5px;color:#222;font-weight:bold;">475 ppm</div>
<div class="a" style="left:1480px;top:683px;width:70px;height:12px;background:#b4b9c2"></div>
<div class="a" style="left:0;top:0;width:1920px;height:1080px;background:rgba(0,0,0,.32)"></div>
<div class="a" style="left:398px;top:116px;width:1125px;height:848px;background:#fff;border-radius:6px;overflow:hidden;box-shadow:0 11px 15px -7px rgba(0,0,0,.2),0 24px 38px 3px rgba(0,0,0,.14),0 9px 46px 8px rgba(0,0,0,.12)"><div class="a" style="left:0;top:0;width:1125px;height:80px;background:#00695c"></div><div class="a" style="left:0;top:80px;width:1125px;height:701px;background:#fafbfc"></div></div>
<div class="t" style="left:418.30px;top:144.26px;font-size:24.5px;color:#fff;transform:scaleX(1.0701);-webkit-text-stroke:0.5px #fff;">Add widget:</div>
<div class="t" style="left:564.00px;top:144.26px;font-size:24.5px;color:#fff;transform:scaleX(1.0689);-webkit-text-stroke:0.5px #fff;">Alarms table</div>
<div class="a" style="left:1181px;top:136.5px;width:191px;height:39px;border-radius:20px;background:rgba(0,0,0,.06)"></div>
<div class="a" style="left:1185px;top:140px;width:74px;height:33px;border-radius:17px;background:#fff"></div>
<div class="t" style="left:1199.21px;top:147.64px;font-size:18.5px;color:#00695c;transform:scaleX(1.0095);-webkit-text-stroke:0.55px #00695c;">Basic</div>
<div class="t" style="left:1276.40px;top:147.34px;font-size:18.5px;color:#fff;transform:scaleX(0.9601);opacity:.85;">Advanced</div>
<svg class="i" style="left:1407.50px;top:141.40px;" width="30" height="30" viewBox="0 0 24 24"><path fill="#fff" d="M12 2C6.48 2 2 6.48 2 12s4.48 10 10 10 10-4.48 10-10S17.52 2 12 2zm1 17h-2v-2h2v2zm2.07-7.75l-.9.92C13.45 12.9 13 13.5 13 15h-2v-.5c0-1.1.45-2.1 1.17-2.83l1.24-1.26c.37-.36.59-.86.59-1.41 0-1.1-.9-2-2-2s-2 .9-2 2H8c0-2.21 1.79-4 4-4s4 1.79 4 4c0 .88-.36 1.68-.93 2.25z"/></svg>
<svg class="i" style="left:1467.50px;top:141.20px;" width="30" height="30" viewBox="0 0 24 24"><path fill="#fff" d="M19 6.41L17.59 5 12 10.59 6.41 5 5 6.41 10.59 12 5 17.59 6.41 19 12 13.41 17.59 19 19 17.59 13.41 12z"/></svg>
<div class="a" style="left:1515px;top:196px;width:8px;height:182px;background:#d9d9d9"></div>
<div class="a" style="left:418px;top:206px;width:1078px;height:170px;background:#fff;border-radius:6px;box-shadow:0 0 10px rgba(0,0,0,.06);"></div>
<div class="t" style="left:437.59px;top:236.47px;font-size:20px;color:#212121;transform:scaleX(1.0370);-webkit-text-stroke:0.55px #212121;">Time window</div>
<div class="a" style="left:986px;top:225.6px;width:490px;height:40px;border-radius:20px;background:#eeeeee"></div>
<div class="a" style="left:989px;top:229px;width:259px;height:35px;border-radius:18px;background:#f2f8f7;border:1.5px solid #00695c"></div>
<div class="t" style="left:1003.73px;top:237.92px;font-size:17.7px;color:#00695c;transform:scaleX(1.0242);-webkit-text-stroke:0.55px #00695c;">Use dashboard time window</div>
<div class="t" style="left:1261.72px;top:237.92px;font-size:17.7px;color:#9e9e9e;transform:scaleX(1.0299);">Use widget time window</div>
<div class="a" style="left:438px;top:286px;width:1038px;height:70px;border:1px solid #e0e0e0;border-radius:6px"></div>
<div class="a" style="left:459px;top:312.8px;width:42px;height:17px;border-radius:9px;background:#e6e6e6"></div>
<div class="a" style="left:479px;top:309px;width:25px;height:25px;border-radius:50%;background:#bdbdbd"></div>
<svg class="i" style="left:482.50px;top:312.50px;" width="18" height="18" viewBox="0 0 24 24"><path fill="#e0e0e0" d="M9 16.17L4.83 12l-1.42 1.41L9 19 21 7l-1.41-1.41z"/></svg>
<div class="t" style="left:522.34px;top:311.22px;font-size:21px;color:#a6a6a6;transform:scaleX(0.9909);">Display time window</div>
<div class="a" style="left:732px;top:298px;width:226px;height:44.5px;border:1px solid #e0e0e0;border-radius:5px"></div>
<svg class="i" style="left:750.00px;top:309.10px;" width="23" height="23" viewBox="0 0 24 24"><path fill="#9e9e9e" d="M11.99 2C6.47 2 2 6.48 2 12s4.47 10 9.99 10C17.52 22 22 17.52 22 12S17.52 2 11.99 2zM12 20c-4.42 0-8-3.58-8-8s3.58-8 8-8 8 3.58 8 8-3.58 8-8 8zm.5-13H11v6l5.25 3.15.75-1.23-4.5-2.67z"/></svg>
<div class="t" style="left:782.20px;top:311.42px;font-size:19px;color:#9e9e9e;transform:scaleX(0.9839);-webkit-text-stroke:0.55px #9e9e9e;">Realtime - last day</div>
<div class="a" style="left:1416.4px;top:296.5px;width:50px;height:49px;border:1px solid #e0e0e0;border-radius:5px"></div>
<svg class="i" style="left:1426.50px;top:306.20px;" width="30" height="30" viewBox="0 0 24 24"><path fill="#d5d5d5" d="M18 4V3c0-.55-.45-1-1-1H5c-.55 0-1 .45-1 1v4c0 .55.45 1 1 1h12c.55 0 1-.45 1-1V6h1v4H9v11c0 .55.45 1 1 1h2c.55 0 1-.45 1-1v-9h8V4h-3z"/></svg>
<div class="a" style="left:418px;top:396px;width:1078px;height:198px;background:#fff;border-radius:6px;box-shadow:0 0 10px rgba(0,0,0,.06);"></div>
<div class="t" style="left:438.00px;top:426.47px;font-size:20px;color:#212121;transform:scaleX(1.0334);-webkit-text-stroke:0.55px #212121;">Alarm source</div>
<div class="a" style="left:1268px;top:415.5px;width:206px;height:40px;border-radius:20px;background:#eeeeee"></div>
<div class="a" style="left:1352.3px;top:418.3px;width:120.3px;height:34.4px;border-radius:18px;background:#f2f8f7;border:1.5px solid #00695c"></div>
<div class="t" style="left:1283.59px;top:427.02px;font-size:17.7px;color:#9e9e9e;transform:scaleX(0.9933);-webkit-text-stroke:0.2px #9e9e9e;">Device</div>
<div class="t" style="left:1367.02px;top:427.52px;font-size:17.7px;color:#00695c;transform:scaleX(1.0461);-webkit-text-stroke:0.55px #00695c;">Entity alias</div>
<div class="a" style="left:438px;top:487px;width:1038px;height:69px;background:#eef4f3;border-radius:5px 5px 0 0;border-bottom:1px solid #9e9e9e;height:68px"></div>
<div class="t" style="left:456.98px;top:496.89px;font-size:15.6px;color:#6b6b6b;transform:scaleX(1.0610);">Entity alias*</div>
<div class="t" style="left:457.45px;top:520.75px;font-size:21.2px;color:#212121;transform:scaleX(1.0057);">Selected entity</div>
<svg class="i" style="left:1370.50px;top:506.40px;" width="30" height="30" viewBox="0 0 24 24"><path fill="#212121" d="M19 6.41L17.59 5 12 10.59 6.41 5 5 6.41 10.59 12 5 17.59 6.41 19 12 13.41 17.59 19 19 17.59 13.41 12z"/></svg>
<svg class="i" style="left:1430.50px;top:506.00px;" width="30" height="30" viewBox="0 0 24 24"><path fill="#212121" d="M3 17.25V21h3.75L17.81 9.94l-3.75-3.75L3 17.25zM20.71 7.04c.39-.39.39-1.020 0-1.41l-2.34-2.34c-.39-.39-1.02-.39-1.41 0l-1.83 1.83 3.75 3.75 1.83-1.83z"/></svg>
<div class="a" style="left:418px;top:614px;width:1078px;height:290px;background:#fff;border-radius:6px;box-shadow:0 0 10px rgba(0,0,0,.06);"></div>
<div class="t" style="left:436.25px;top:645.77px;font-size:20px;color:#212121;transform:scaleX(1.0920);-webkit-text-stroke:0.55px #212121;">Filter</div>
<div class="t" style="left:1410.34px;top:646.96px;font-size:18px;color:#00695c;transform:scaleX(1.0127);-webkit-text-stroke:0.55px #00695c;">Reset</div>
<div class="a" style="left:438px;top:699px;width:1038px;height:69px;border:1px solid #e0e0e0;border-radius:6px"></div>
<div class="t" style="left:459.20px;top:723.19px;font-size:20.8px;color:#212121;">Alarm status list</div>
<div class="a" style="left:438px;top:788.6px;width:1038px;height:69px;border:1px solid #e0e0e0;border-radius:6px"></div>
<div class="t" style="left:459.20px;top:812.69px;font-size:20.8px;color:#212121;transform:scaleX(0.9877);">Alarm severity list</div>
<div class="a" style="left:912.5px;top:712.8px;width:115.5px;height:40px;border-radius:20px;background:#00574b"></div>
<div class="t" style="left:963.40px;top:724.29px;font-size:18.2px;color:#fff;transform:scaleX(0.9918);">Active</div>
<svg class="i" style="left:925.50px;top:721.00px;" width="24" height="24" viewBox="0 0 24 24"><path fill="#fff" d="M9 16.17L4.83 12l-1.42 1.41L9 19 21 7l-1.41-1.41z"/></svg>
<div class="a" style="left:1038px;top:712.8px;width:90.75px;height:40px;border-radius:20px;background:#e0e0e0"></div>
<div class="t" style="left:1052.11px;top:724.29px;font-size:18.2px;color:#333;transform:scaleX(0.9830);">Cleared</div>
<div class="a" style="left:1139px;top:712.8px;width:148.5px;height:40px;border-radius:20px;background:#e0e0e0"></div>
<div class="t" style="left:1154.70px;top:724.29px;font-size:18.2px;color:#333;">Acknowledged</div>
<div class="a" style="left:1297.8px;top:712.8px;width:167.79999999999995px;height:40px;border-radius:20px;background:#e0e0e0"></div>
<div class="t" style="left:1311.22px;top:724.29px;font-size:18.2px;color:#333;">Unacknowledged</div>
<div class="a" style="left:946.9px;top:802.8px;width:86.85000000000002px;height:40px;border-radius:20px;background:#e0e0e0"></div>
<div class="t" style="left:961.56px;top:813.34px;font-size:18.2px;color:#333;transform:scaleX(1.0360);">Critical</div>
<div class="a" style="left:1043.75px;top:802.8px;width:77.25px;height:40px;border-radius:20px;background:#e0e0e0"></div>
<div class="t" style="left:1057.88px;top:813.34px;font-size:18.2px;color:#333;transform:scaleX(1.0407);">Major</div>
<div class="a" style="left:1131.25px;top:802.8px;width:75.65000000000009px;height:40px;border-radius:20px;background:#e0e0e0"></div>
<div class="t" style="left:1144.48px;top:813.34px;font-size:18.2px;color:#333;transform:scaleX(1.0407);">Minor</div>
<div class="a" style="left:1217.2px;top:802.8px;width:95.29999999999995px;height:40px;border-radius:20px;background:#e0e0e0"></div>
<div class="t" style="left:1232.20px;top:813.34px;font-size:18.2px;color:#333;transform:scaleX(0.9883);">Warning</div>
<div class="a" style="left:1322.8px;top:802.8px;width:142.79999999999995px;height:40px;border-radius:20px;background:#e0e0e0"></div>
<div class="t" style="left:1336.72px;top:813.34px;font-size:18.2px;color:#333;transform:scaleX(1.0239);">Indeterminate</div>
<div class="a" style="left:438px;top:878.5px;width:1038px;height:69px;border:1px solid #e0e0e0;border-radius:6px"></div>
<div class="a" style="left:729.4px;top:887px;width:736px;height:50px;border:1px solid #e0e0e0;border-radius:5px"></div>
<div class="a" style="left:398px;top:897.8px;width:1125px;height:66.2px;background:#fff;border-radius:0 0 6px 6px"></div>
<div class="t" style="left:417.96px;top:923.26px;font-size:18px;color:#00695c;transform:scaleX(1.0461);-webkit-text-stroke:0.55px #00695c;">Cancel</div>
<div class="t" style="left:1335.71px;top:922.86px;font-size:18px;color:#00695c;transform:scaleX(1.0332);-webkit-text-stroke:0.55px #00695c;">Preview</div>
<div class="a" style="left:1433.3px;top:909px;width:80px;height:45px;border-radius:5px;background:#00695c;box-shadow:0 2px 3px rgba(0,0,0,.25)"></div>
<div class="t" style="left:1456.40px;top:922.86px;font-size:18px;color:#fff;transform:scaleX(1.0188);-webkit-text-stroke:0.55px #fff;">Add</div>
<svg class="i" style="left:0;top:0" width="1920" height="1080" viewBox="0 0 1920 1080"><path fill="none" stroke="#fcc332" stroke-width="3" stroke-linejoin="round" style="filter:drop-shadow(0 0 2px rgba(252,195,50,.6))" d="M1263 485 V414 Q1263 404.5 1273 404.5 H1468 Q1478 404.5 1478 414 V547.7 Q1478 557.7 1468 557.7 H445 Q435.5 557.7 435.5 547.7 V495 Q435.5 485 445 485 Z"/><rect x="424.5" y="633" width="1063" height="236.5" rx="10" fill="none" stroke="#fcc332" stroke-width="3" style="filter:drop-shadow(0 0 2px rgba(252,195,50,.6))"/><line x1="1478" y1="510.4" x2="1533" y2="510.4" stroke="#fcc332" stroke-width="3" stroke-dasharray="10 7"/><circle cx="1478" cy="510.4" r="5" fill="#fcc332"/><line x1="1487.5" y1="726.5" x2="1539" y2="726.5" stroke="#fcc332" stroke-width="3" stroke-dasharray="10 7"/><circle cx="1487.5" cy="726.5" r="5" fill="#fcc332"/><path d="M433 668.5 Q470 666.5 503 670 Q470 670 433 671 Z" fill="#fcc332"/><path d="M453 745 Q545 744 635 747.5 Q545 747 453 748.5 Z" fill="#fcc332"/><path d="M1544.6 828.7 H1557.6 V957 H1563.9 L1551 990.5 L1537.8 957 H1544.6 Z" fill="#fcc332" stroke="#333" stroke-width="1"/></svg>
<div class="a" style="left:1531.5px;top:476px;width:324.9000000000001px;height:75.5px;background:#fdf1df;border:3px solid #fcc332;border-radius:10px;box-shadow:0 0 3px rgba(252,195,50,.6)"></div>
<div class="a" style="left:1553px;top:444px;width:30px;height:35px;background:#fff;border:3px solid #fcc332;border-radius:8px;box-shadow:0 0 3px rgba(252,195,50,.6)"></div>
<div class="t" style="left:1560.01px;top:448.84px;font-size:27px;color:#000;">6</div>
<div class="t" style="left:1539.98px;top:483.50px;font-size:28px;color:#000;">Specify "Selected entity"</div>
<div class="t" style="left:1539.98px;top:516.90px;font-size:28px;color:#000;">alias as datasource</div>
<div class="a" style="left:1538px;top:678px;width:368.5px;height:108.5px;background:#fdf1df;border:3px solid #fcc332;border-radius:10px;box-shadow:0 0 3px rgba(252,195,50,.6)"></div>
<div class="a" style="left:1558px;top:646px;width:30px;height:35px;background:#fff;border:3px solid #fcc332;border-radius:8px;box-shadow:0 0 3px rgba(252,195,50,.6)"></div>
<div class="t" style="left:1564.76px;top:650.30px;font-size:28px;color:#000;">7</div>
<div class="t" style="left:1545.90px;top:685.60px;font-size:28px;color:#000;">Check "Active" in the alarm</div>
<div class="t" style="left:1546.74px;top:718.60px;font-size:28px;color:#000;">status list of the filter section</div>
<div class="t" style="left:1547.02px;top:751.80px;font-size:28px;color:#000;">to display only active alarms</div>
<div class="a" style="left:1581.5px;top:882px;width:161.0px;height:42px;background:#fdf1df;border:3px solid #fcc332;border-radius:10px;box-shadow:0 0 3px rgba(252,195,50,.6)"></div>
<div class="t" style="left:1590.37px;top:889.60px;font-size:28px;color:#000;transform:scaleX(1.0068);">Scroll down</div>
<svg class="i" style="left:1408px;top:441px" width="20" height="30" viewBox="-1 -1 20 30">
<path d="M4.6 13.6 V1.3 Q4.6 0.4 5.9 0.4 Q7.2 0.4 7.2 1.3 V5.6 H9.8 V6.5 H12.8 V7.5 H14.5 L16.3 9.4 V15.4 L15.2 19.2 V21.3 H5.3 V19.6 L0.6 11.3 V9.6 H3 L4.6 11.2 Z" fill="#fff" stroke="#000" stroke-width="1.2" stroke-linejoin="round"/>
<path d="M7.5 5.8 V10.2 M10.5 6.6 V10.4 M13.5 7.6 V10.8" stroke="#000" stroke-width="1.1"/>
<rect x="5.3" y="21.3" width="9.4" height="5.4" fill="#fcc332" stroke="#000" stroke-width="1.2"/><rect x="11" y="23" width="2.1" height="1.9" fill="#000"/>
</svg>
<svg class="i" style="left:959px;top:744px" width="20" height="30" viewBox="-1 -1 20 30">
<path d="M4.6 13.6 V1.3 Q4.6 0.4 5.9 0.4 Q7.2 0.4 7.2 1.3 V5.6 H9.8 V6.5 H12.8 V7.5 H14.5 L16.3 9.4 V15.4 L15.2 19.2 V21.3 H5.3 V19.6 L0.6 11.3 V9.6 H3 L4.6 11.2 Z" fill="#fff" stroke="#000" stroke-width="1.2" stroke-linejoin="round"/>
<path d="M7.5 5.8 V10.2 M10.5 6.6 V10.4 M13.5 7.6 V10.8" stroke="#000" stroke-width="1.1"/>
<rect x="5.3" y="21.3" width="9.4" height="5.4" fill="#fcc332" stroke="#000" stroke-width="1.2"/><rect x="11" y="23" width="2.1" height="1.9" fill="#000"/>
</svg>
</body></html>
